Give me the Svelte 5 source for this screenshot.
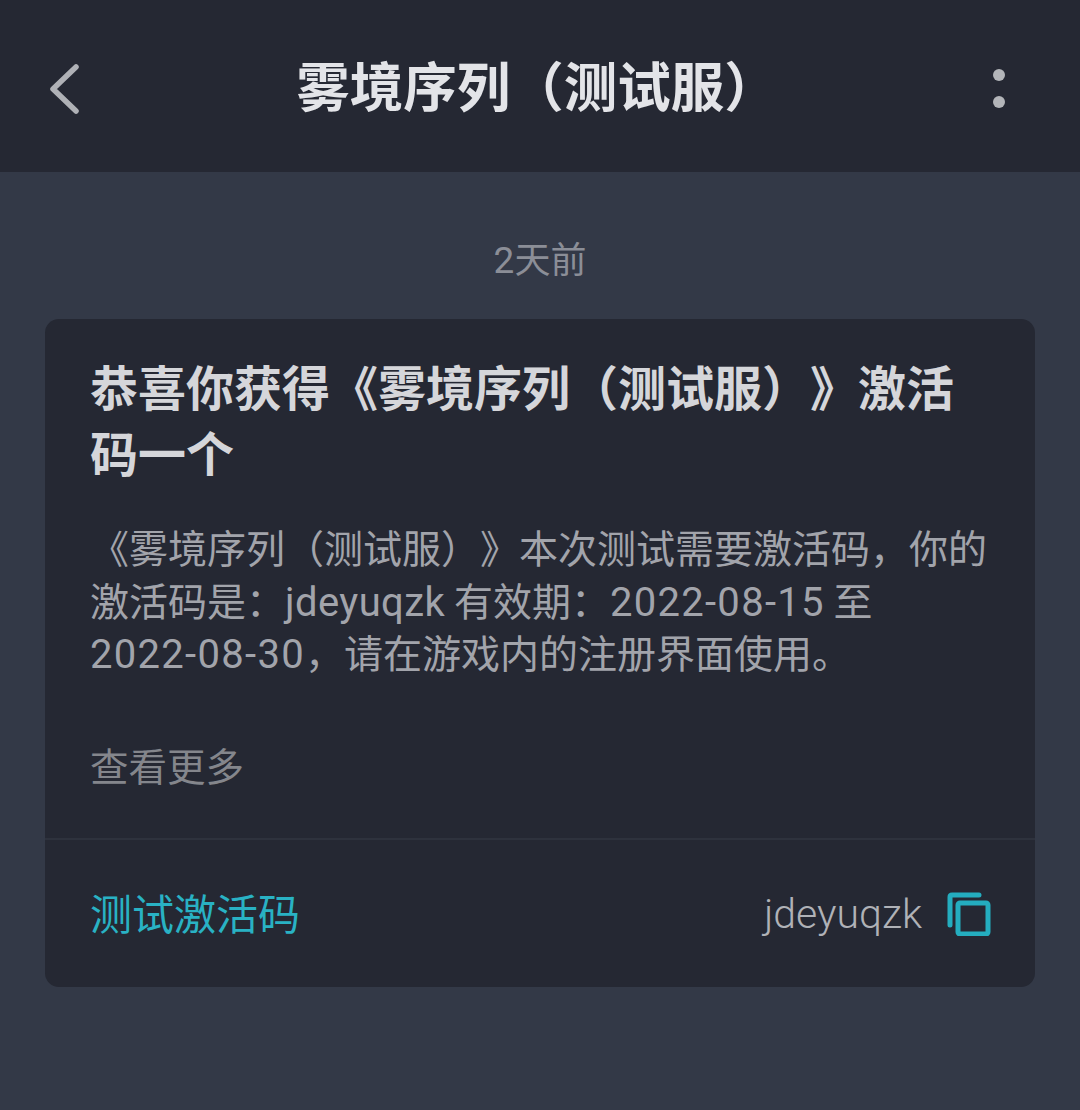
<script>
  const title = '雾境序列（测试服）';
</script>

<div class="page">
  <header class="bar">
    <svg class="back" viewBox="0 0 32 52" width="32" height="52" aria-hidden="true">
      <path d="M27 4 L4 26 L27 48" fill="none" stroke="#afb1b6" stroke-width="5.5" stroke-linecap="round" stroke-linejoin="round" />
    </svg>
    <h1>{title}</h1>
    <div class="more" aria-hidden="true"><i></i><i></i></div>
  </header>

  <main class="feed">
    <div class="time"><span class="lt">2</span>天前</div>
    <article class="card">
      <div class="body">
        <h2>恭喜你获得《雾境序列（测试服）》激活码一个</h2>
        <p>《雾境序列（测试服）》本次测试需要激活码，你的激活码是：<span class="lt">jdeyuqzk</span> 有效期：<span class="lt num">2022-08-15</span> 至 <span class="lt num">2022-08-30</span>，请在游戏内的注册界面使用。</p>
        <div class="link">查看更多</div>
      </div>
      <div class="foot">
        <span class="label">测试激活码</span>
        <span class="code">jdeyuqzk</span>
        <svg class="copy" viewBox="0 0 44 44" width="44" height="44" aria-hidden="true">
          <path d="M3 33 V5 Q3 3 5 3 H32" fill="none" stroke="#24adbf" stroke-width="5" stroke-linecap="round" />
          <rect x="11" y="11" width="30" height="31" rx="2" fill="none" stroke="#24adbf" stroke-width="5" />
        </svg>
      </div>
    </article>
  </main>
</div>

<style>
  :global(body) {
    margin: 0;
    background: #333947;
  }
  .page {
    height: 1110px;
    overflow: hidden;
    background: #333947;
    font-family: "Noto Sans CJK SC", sans-serif;
    text-spacing-trim: space-all;
  }
  .lt {
    font-family: "Roboto", "Noto Sans CJK SC", sans-serif;
    font-weight: 400;
    font-size: 1.026em;
    letter-spacing: 0.4px;
    line-height: 1;
    white-space: nowrap;
  }
  .num {
    letter-spacing: 1.3px;
  }
  .bar {
    height: 172px;
    box-sizing: border-box;
    background: #252833;
    display: flex;
    align-items: center;
    padding: 0 75px 0 49px;
  }
  .back {
    flex: none;
    margin-top: 6px;
  }
  h1 {
    flex: 1;
    margin: 0 0 4px;
    text-align: center;
    font-size: 53.5px;
    font-weight: 700;
    color: #e3e4e8;
    line-height: 60px;
    white-space: nowrap;
  }
  .more {
    flex: none;
    display: flex;
    flex-direction: column;
    gap: 15px;
    margin-top: 5px;
  }
  .more i {
    display: block;
    width: 12px;
    height: 12px;
    border-radius: 50%;
    background: #b3b5b9;
  }
  .feed {
    padding: 62px 45px 0;
  }
  .time {
    text-align: center;
    font-size: 36px;
    line-height: 46px;
    color: #8b8e97;
  }
  .card {
    margin-top: 39px;
    background: #252833;
    border-radius: 14px;
    height: 668px;
    display: flex;
    flex-direction: column;
  }
  .body {
    height: 521px;
    box-sizing: border-box;
    padding: 33px 45px 0;
    border-bottom: 2px solid #2e323d;
  }
  h2 {
    margin: 0;
    font-size: 48px;
    line-height: 66px;
    font-weight: 700;
    color: #d5d6da;
  }
  p {
    margin: 36px 0 0;
    font-size: 39px;
    line-height: 52.5px;
    color: #a2a4ab;
  }
  .link {
    margin-top: 60px;
    font-size: 38.5px;
    line-height: 52px;
    color: #84868c;
  }
  .foot {
    flex: 1;
    display: flex;
    align-items: center;
    padding: 0 44px 0 45px;
  }
  .label {
    font-size: 42px;
    color: #29b2c4;
    padding-bottom: 4px;
  }
  .code {
    margin-left: auto;
    font-family: "Roboto", sans-serif;
    font-weight: 300;
    font-size: 41px;
    color: #b0b2b7;
  }
  .copy {
    flex: none;
    margin-left: 25px;
  }
</style>
